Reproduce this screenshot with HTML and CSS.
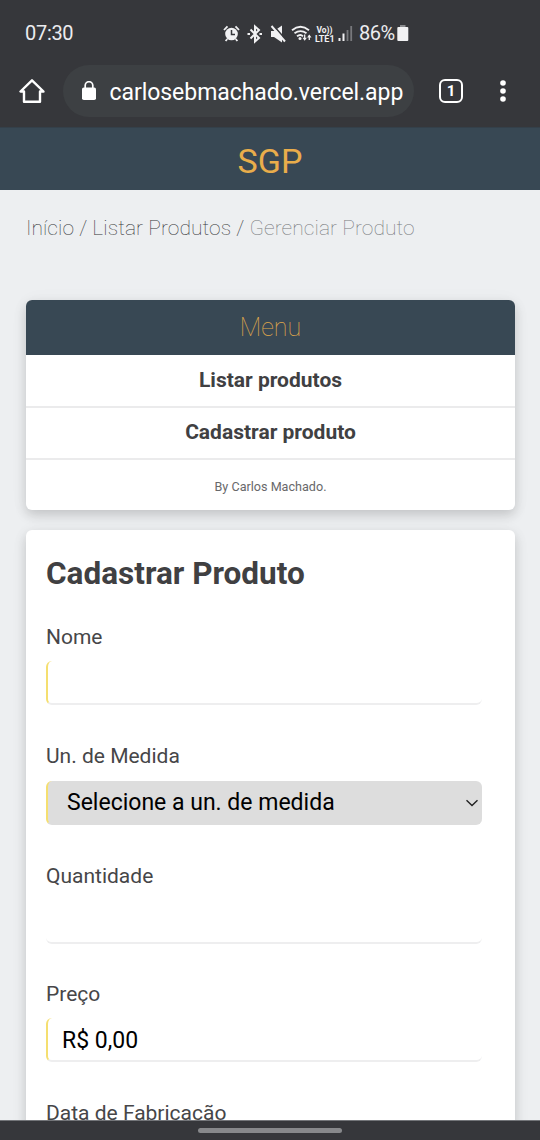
FILE: index.html
```html
<!DOCTYPE html>
<html lang="pt-BR">
<head>
<meta charset="utf-8">
<title>SGP</title>
<link rel="stylesheet" href="styles.css">
</head>
<body>
<div class="phone">
  <div class="status">
    <span class="clock">07:30</span>
    <svg class="status-icons" width="136" height="24" viewBox="220 20 136 24" fill="none" stroke="#f1f1f3" stroke-width="1.5">
      <circle cx="231.500" cy="33" r="6.300" fill="#f1f1f3" stroke="none"/>
      <path d="M231.500 29v4.500h3.500" stroke="#36373b"/>
      <path d="M224 29l3.500-3.700M239 29l-3.500-3.700M227.300 38l-1.700 2M235.700 38l1.700 2" stroke-width="1.800"/>
      <path d="M250.500 28.500l8.500 8.500-4 3.500v-15l4 3.500-8.500 8.500" stroke-width="2"/>
      <path d="M247.500 33h2.500M259.500 33h2.500" stroke-width="2.200"/>
      <path d="M271 30h3l8-5.500v17l-8-5.500h-3z" fill="#f1f1f3" stroke="none"/>
      <path d="M273 24l13 15" stroke="#36373b" stroke-width="1.800"/>
      <path d="M271.500 25l13.500 15.500" stroke-width="2"/>
      <path d="M292 29.300q8.500-7 17 0M294.500 32.300q6-4.500 12 0M297 35.300q3.500-2.600 6 0" stroke-width="1.800"/>
      <circle cx="300" cy="37.500" r="1.500" fill="#f1f1f3" stroke="none"/>
      <path d="M304.700 33.500v4.500M309.300 39v-4.500" stroke-width="1.300"/>
      <path d="M302.500 36.800h4.400l-2.200 3zM307.100 36.500h4.400l-2.200-3z" fill="#f1f1f3" stroke="none"/>
      <g class="volte"><text x="316.500" y="31.500" textLength="16" lengthAdjust="spacingAndGlyphs">Vo))</text><text x="315" y="40.800" textLength="19.500" lengthAdjust="spacingAndGlyphs">LTE1</text></g>
      <path d="M339.500 37v3M343.500 32.500v7.500" stroke-width="2"/>
      <path d="M347.500 29v11M351.200 25v15" stroke="#77787c" stroke-width="1.800"/>
    </svg>
    <span class="percent">86%</span>
    <svg class="battery" width="12" height="16" viewBox="0 0 12 16"><path d="M3 0h5.500v2H3z" fill="#8a8b8e"/><rect x=".3" y="2" width="11" height="14" rx="1" fill="#f1f1f3"/></svg>
  </div>
  <div class="toolbar">
    <svg class="home" width="26" height="26" viewBox="0 0 26 26" fill="none" stroke="#fff" stroke-width="2.400" stroke-linejoin="round"><path d="M1.500 13.500H5v10.300h16V13.500h3.500L13 2.300z"/></svg>
    <div class="address">
      <svg width="16" height="20" viewBox="0 0 16 20"><rect y="6.500" x="1" width="14" height="12.500" rx="1.800" fill="#fff"/><path d="M4.200 8V4.500a3.800 3.800 0 0 1 7.600 0V8" fill="none" stroke="#fff" stroke-width="1.700"/></svg>
      <span class="url">carlosebmachado.vercel.app</span>
    </div>
    <div class="tabs">1</div>
    <svg class="more" width="8" height="22" viewBox="0 0 8 22" fill="#fff"><circle cx="4" cy="3" r="2.800"/><circle cx="4" cy="11" r="2.800"/><circle cx="4" cy="19" r="2.800"/></svg>
  </div>
  <header class="brand"><span>SGP</span></header>
  <main class="page">
    <nav class="crumbs"><span class="crumb-links">Início / Listar Produtos /</span> <span class="current">Gerenciar Produto</span></nav>
    <section class="card menu">
      <h2 class="menu-title">Menu</h2>
      <a class="menu-item">Listar produtos</a>
      <a class="menu-item">Cadastrar produto</a>
      <p class="credit">By Carlos Machado.</p>
    </section>
    <section class="card form">
      <h1 class="form-title">Cadastrar Produto</h1>
      <div class="field"><label>Nome</label><div class="input required"></div></div>
      <div class="field unit"><label>Un. de Medida</label><div class="input required select"><span>Selecione a un. de medida</span><svg width="14" height="8" viewBox="0 0 14 8" fill="none" stroke="#222" stroke-width="1.400"><path d="M1.500 1.200L7 6.500l5.500-5.300"/></svg></div></div>
      <div class="field quantity"><label>Quantidade</label><div class="input"></div></div>
      <div class="field"><label>Preço</label><div class="input required"><span class="price">R$ 0,00</span></div></div>
      <div class="field"><label>Data de Fabricação</label></div>
    </section>
  </main>
  <div class="gesture"><div class="handle"></div></div>
</div>
</body>
</html>
```
FILE: styles.css
```css
* { box-sizing: border-box; }
body { margin: 0; font-family: Roboto, sans-serif; color: #404042; background: #edeff1; }
.phone { width: 540px; height: 1140px; display: flex; flex-direction: column; overflow: hidden; }
.status { height: 55px; flex: none; display: flex; align-items: center; padding: 11px 0 0 25px; background: #36373b; color: #ececef; font-size: 20px; line-height: 24px; }
.clock { width: 195px; letter-spacing: -.3px; }
.status-icons { margin-top: -1px; }
.volte { fill: #f1f1f3; stroke: none; font: 700 9.500px Roboto, sans-serif; }
.percent { width: 38px; margin-left: 3px; letter-spacing: -.5px; }
.battery { margin-top: -1px; }
.toolbar { height: 72px; flex: none; display: flex; align-items: center; padding: 0 0 0 19px; background: #36373b; }
.address { width: 351px; height: 52px; margin-left: 18px; padding-left: 18px; display: flex; align-items: center; border-radius: 26px; background: #3d4043; color: #fff; }
.url { margin: 3px 0 0 12.500px; font-size: 23px; line-height: 28px; letter-spacing: -.05px; white-space: nowrap; }
.tabs { width: 24px; height: 24px; margin-left: 25px; border: 2.500px solid #fff; border-radius: 6px; color: #fff; font-size: 15px; font-weight: 700; line-height: 20px; text-align: center; }
.more { margin-left: 36px; }
.brand { height: 63px; flex: none; padding-top: 13px; background: #384854; border-top: 1px solid #34404a; color: #e9ad4b; text-align: center; font-size: 34px; line-height: 40px; }
.page { flex: 1; min-height: 0; overflow: hidden; padding: 24px 25px 0 26px; }
.crumbs { height: 28px; margin-bottom: 58px; font-size: 21px; line-height: 28px; font-weight: 100; letter-spacing: .07px; color: #333537; white-space: nowrap; }
.current { color: #77797c; }
.card { border-radius: 6px; background: #fff; box-shadow: 0 5px 12px rgba(0,0,0,.16), 0 2px 20px rgba(0,0,0,.04); }
.menu { height: 210px; overflow: hidden; text-align: center; }
.menu-title { height: 55px; margin: 0; background: #384854; color: #e0a94b; font-size: 25px; line-height: 55px; font-weight: 100; }
.menu-item { display: block; height: 52px; border-bottom: 2px solid #ebebec; font-size: 21px; line-height: 49px; font-weight: 700; }
.menu-item:nth-of-type(1) { height: 53px; line-height: 51px; }
.credit { margin: 0; padding-top: 17px; font-size: 12.600px; line-height: 20px; color: #68686a; }
.form { height: 700px; margin-top: 20px; padding: 24px 20px; }
.form-title { margin: 0; height: 71px; font-size: 31.500px; line-height: 40px; font-weight: 700; }
.field { height: 119px; }
.field label { display: block; height: 36px; font-size: 21px; line-height: 25px; color: #464648; }
.input { width: 436px; height: 44px; border-bottom: 2px solid #eeeeef; border-radius: 6px; display: flex; align-items: center; color: #000; font-size: 23px; line-height: 28px; }
.input span { padding-top: 3px; }
.required { border-left: 2.500px solid #f5df70; }
.select { height: 44px; margin-top: 1px; background: #ddd; border-bottom-color: #ddd; padding: 0 3px 0 19px; justify-content: space-between; }
.select span { padding-top: 2px; }
.select svg { margin-top: 2px; }
.unit { height: 120px; }
.quantity { height: 118px; }
.price { margin-left: 14px; }
.gesture { height: 20px; flex: none; padding-top: 7px; background: #36373b; border-top: 1px solid #737579; }
.handle { width: 144px; height: 5px; margin: 0 auto; border-radius: 3px; background: #87888b; }
```
